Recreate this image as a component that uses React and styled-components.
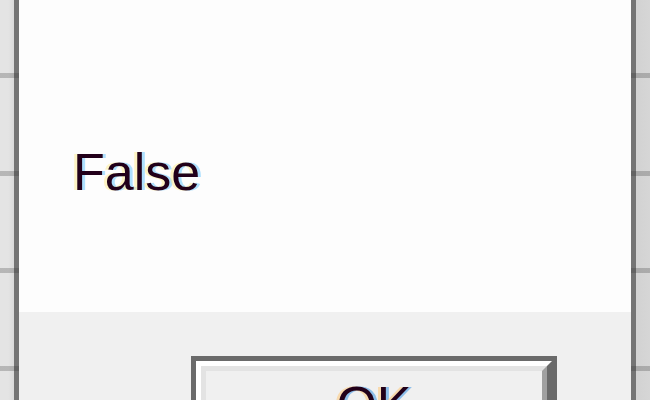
import styled, { createGlobalStyle } from "styled-components";

const Global = createGlobalStyle`
  html, body {
    margin: 0;
    padding: 0;
    background: #e3e3e3;
  }
  body {
    width: 650px;
    height: 400px;
    overflow: hidden;
    font-family: "Liberation Sans", Arial, sans-serif;
  }
`;

// Background behind the message box, with its faint grid lines
const Screen = styled.div`
  display: flex;
  width: 650px;
  height: 400px;
  overflow: hidden;
`;

const Strip = styled.div`
  width: 14px;
  flex-shrink: 0;
  background:
    repeating-linear-gradient(
      to bottom,
      transparent 0px,
      transparent 73px,
      rgba(0, 0, 0, 0.2) 73px,
      rgba(0, 0, 0, 0.2) 78px,
      transparent 78px,
      transparent 97.7px
    ),
    ${({ $side }) =>
      $side === "left"
        ? "linear-gradient(to right, #e4e4e4 60%, #d9d9d9)"
        : "linear-gradient(to right, #d2d2d2, #d6d6d6)"};
`;

const Frame = styled.div`
  width: 5px;
  flex-shrink: 0;
  background:
    repeating-linear-gradient(
      to bottom,
      transparent 0px,
      transparent 73px,
      rgba(0, 0, 0, 0.15) 73px,
      rgba(0, 0, 0, 0.15) 78px,
      transparent 78px,
      transparent 97.7px
    ),
    #747474;
`;

const Dialog = styled.div`
  flex: 1;
  display: flex;
  flex-direction: column;
`;

const Body = styled.div`
  height: 312px;
  flex-shrink: 0;
  background: #fdfdfd;
  box-sizing: border-box;
  padding: 142px 0 0 54px;
`;

const Message = styled.div`
  font-size: 52px;
  line-height: 60px;
  color: #22001a;
  text-shadow: -3px 0 rgba(255, 236, 150, 0.55), 3px 0 rgba(110, 200, 255, 0.55);
`;

const Footer = styled.div`
  flex: 1;
  background: #f0f0f0;
  padding: 44px 0 0 172px;
`;

const Button = styled.div`
  width: 366px;
  height: 115px;
  box-sizing: border-box;
  border: 5px solid #6a6a6a;
`;

const Bevel = styled.div`
  height: 100%;
  box-sizing: border-box;
  border-style: solid;
  border-width: 5px;
  border-color: #ffffff #6a6a6a #6a6a6a #ffffff;
`;

const Face = styled.div`
  height: 100%;
  box-sizing: border-box;
  border-style: solid;
  border-width: 5px;
  border-color: #e3e3e3 #a0a0a0 #a0a0a0 #e3e3e3;
  background: #f0f0f0;
  display: flex;
  justify-content: center;
  padding-top: 4px;
  font-size: 52px;
  line-height: 60px;
  color: #22001a;
  text-shadow: -3px 0 rgba(255, 200, 120, 0.55), 3px 0 rgba(60, 150, 230, 0.55);
`;

export default function App() {
  return (
    <>
      <Global />
      <Screen>
        <Strip $side="left" />
        <Frame />
        <Dialog>
          <Body>
            <Message>False</Message>
          </Body>
          <Footer>
            <Button>
              <Bevel>
                <Face>OK</Face>
              </Bevel>
            </Button>
          </Footer>
        </Dialog>
        <Frame />
        <Strip $side="right" />
      </Screen>
    </>
  );
}
